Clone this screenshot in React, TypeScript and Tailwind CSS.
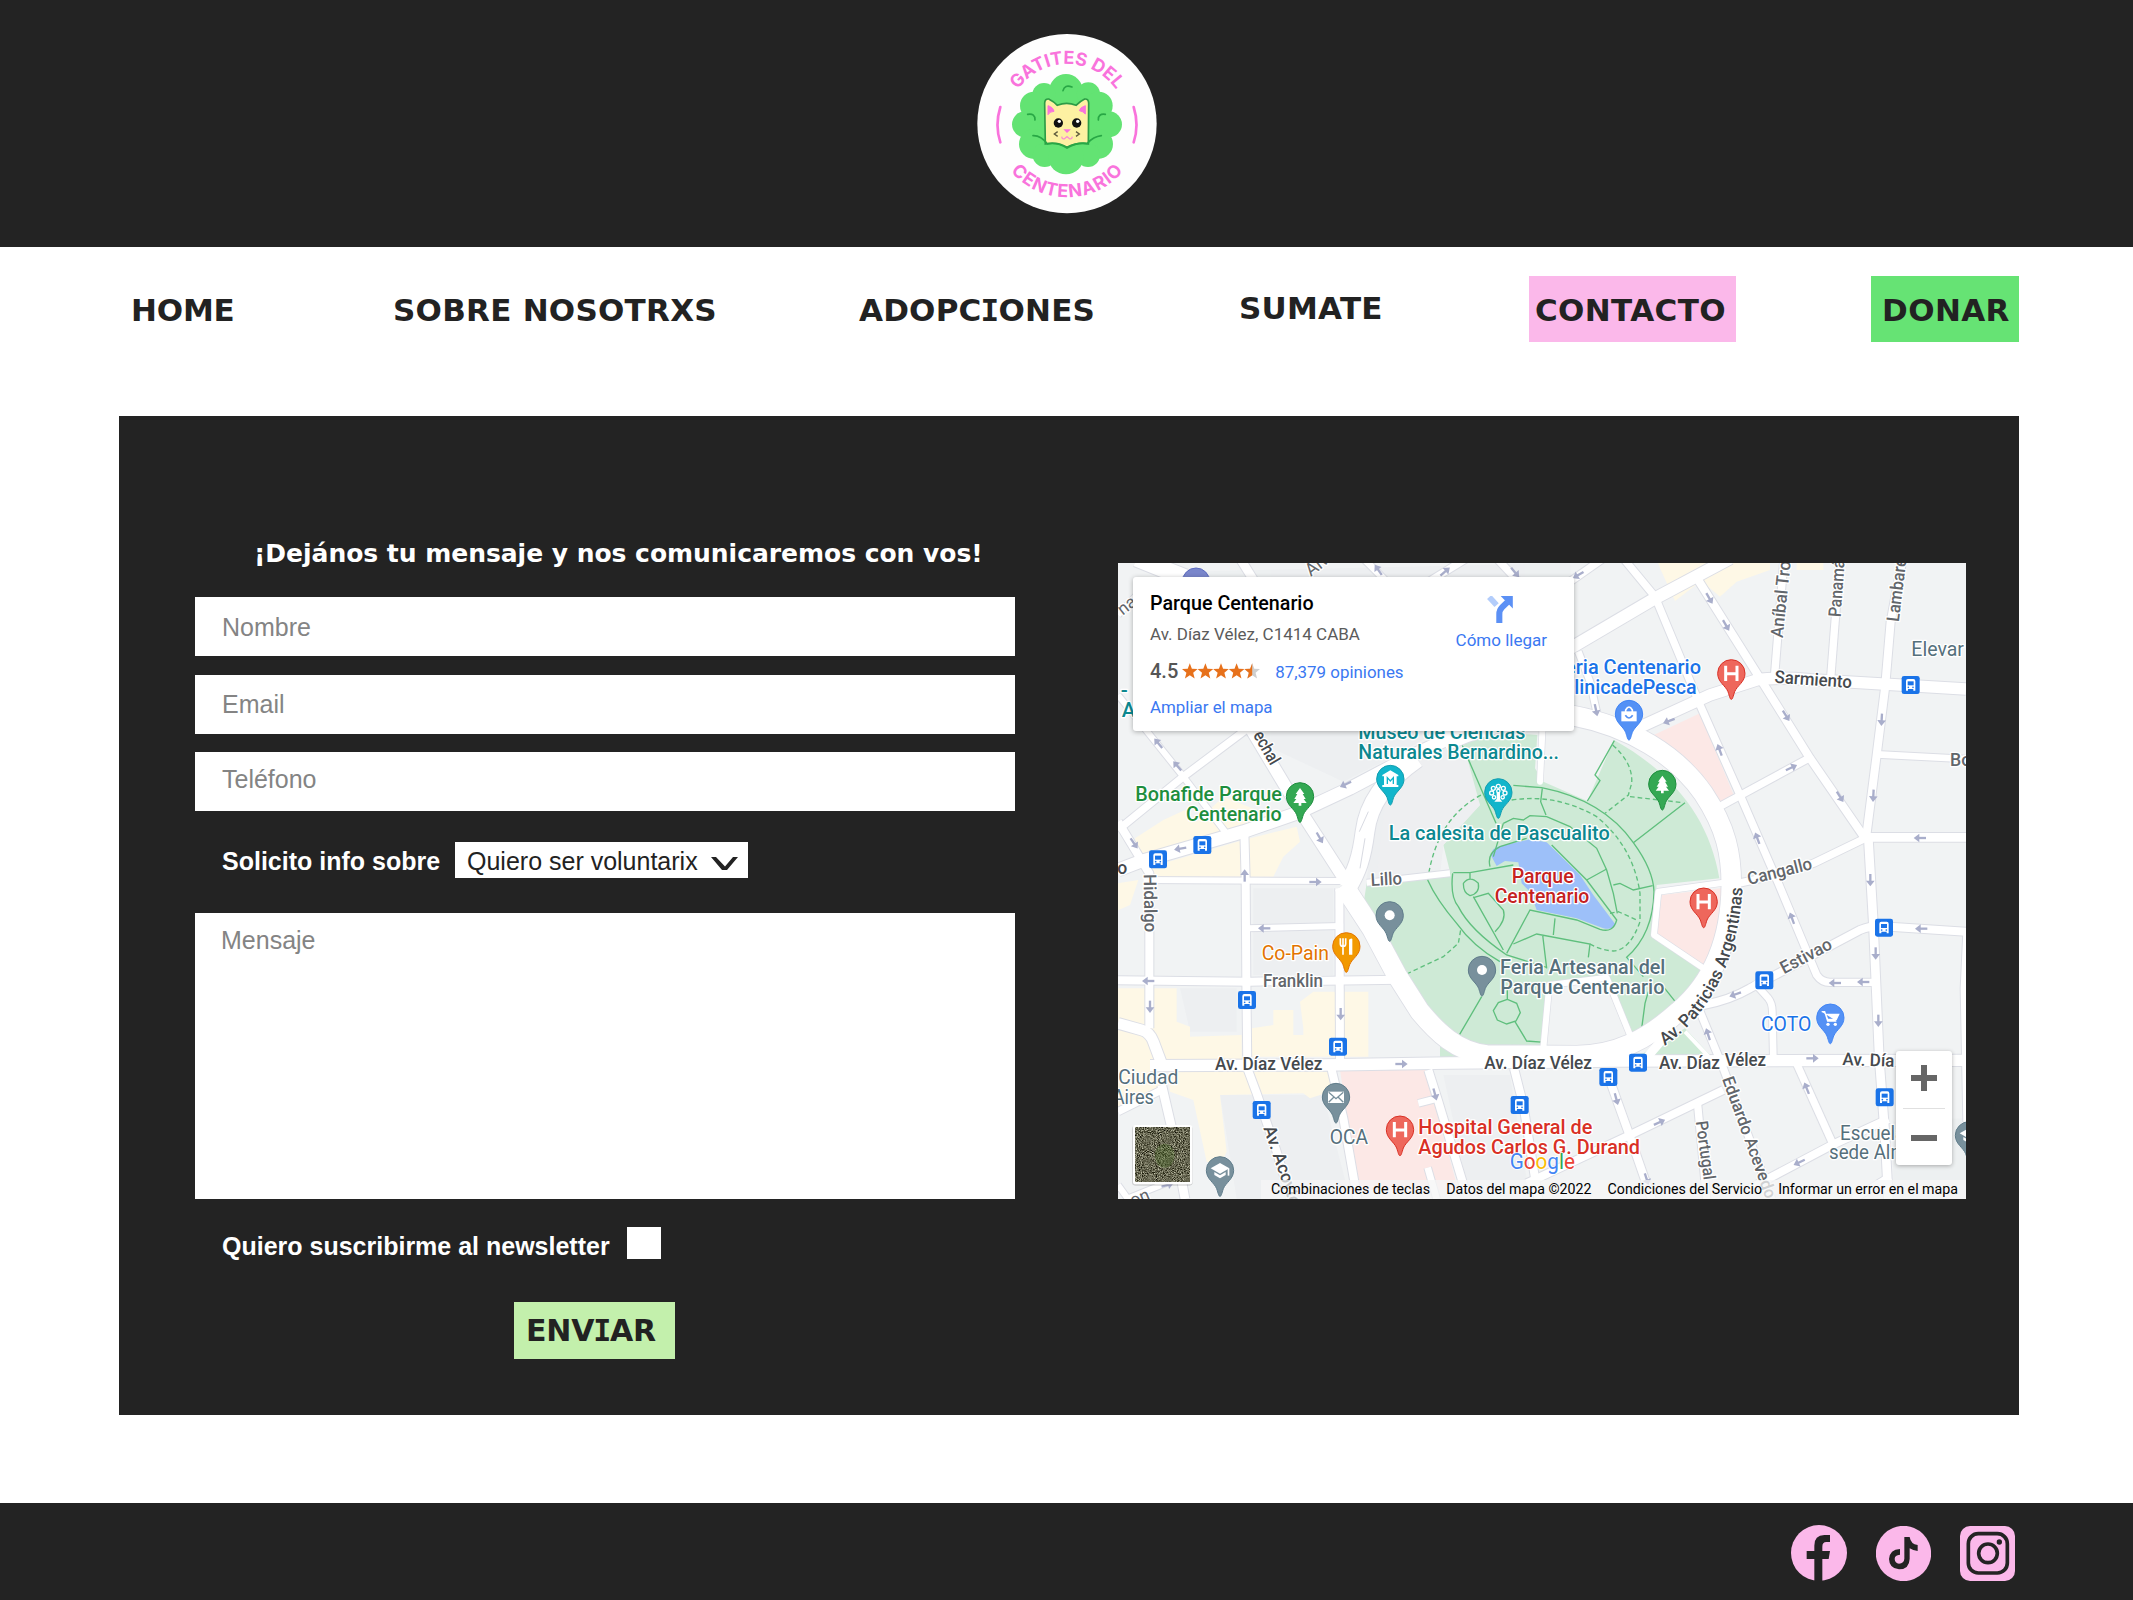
import React from "react";

const BOLD = "font-['Verdana','DejaVu_Sans',sans-serif] font-bold";
const SANS = "font-['Liberation_Sans',Arial,sans-serif]";
const ROBOTO = "font-['Roboto',sans-serif]";

/* Capital I with slab serifs, set from the monospaced cut of the same family. */
function SerifI() {
  return <span className="font-['DejaVu_Sans_Mono',monospace] -mx-[1px]">I</span>;
}

function Logo() {
  return (
    <svg viewBox="0 0 660 630" className="h-[210px] w-[220px]">
      <defs>
        <path id="arc-top" d="M142 311 A179 179 0 0 1 500 311" />
        <path id="arc-bottom" d="M100 311 A221 221 0 0 0 542 311" />
      </defs>
      <circle cx="321" cy="311" r="269" fill="#fefefe" />
      <g fill="#f973dc" fontFamily="Inter, Lato, sans-serif" fontWeight="700" fontSize="54">
        <text>
          <textPath href="#arc-top" startOffset="50%" textAnchor="middle" textLength="345">GATITES DEL</textPath>
        </text>
        <text>
          <textPath href="#arc-bottom" startOffset="50%" textAnchor="middle" textLength="384">CENTENARIO</textPath>
        </text>
      </g>
      <g fill="none" stroke="#f973dc" strokeWidth="8" strokeLinecap="round">
        <path d="M121 261 Q104 315 121 367" />
        <path d="M521 261 Q538 315 521 367" />
      </g>
      <g fill="#63e373">
        <ellipse cx="320" cy="312" rx="125" ry="108" />
        <circle cx="318" cy="212" r="50" />
        <circle cx="385" cy="222" r="35" />
        <circle cx="252" cy="224" r="35" />
        <circle cx="222" cy="257" r="42" />
        <circle cx="416" cy="257" r="42" />
        <circle cx="195" cy="313" r="39" />
        <circle cx="447" cy="313" r="39" />
        <circle cx="222" cy="372" r="45" />
        <circle cx="414" cy="372" r="45" />
        <circle cx="254" cy="405" r="36" />
        <circle cx="384" cy="405" r="36" />
        <circle cx="318" cy="410" r="53" />
      </g>
      <path
        d="M256 372 L254 250 Q254 236 266 237 Q282 245 292 256 Q320 244 348 256 Q360 244 374 237 Q386 236 386 250 L385 372 Q350 366 321 382 Q290 364 256 372Z"
        fill="#fdf1a2"
        stroke="#2d9c46"
        strokeWidth="5"
      />
      <path d="M264 257 Q280 262 282 274 Q270 274 264 284Z" fill="#f973dc" stroke="#f973dc" strokeWidth="3" />
      <path d="M376 257 Q360 262 358 272 Q370 274 376 282Z" fill="#f973dc" stroke="#f973dc" strokeWidth="3" />
      <circle cx="295" cy="309" r="14" fill="#111" />
      <circle cx="350" cy="309" r="14" fill="#111" />
      <circle cx="298" cy="304" r="5" fill="#fff" />
      <circle cx="353" cy="304" r="5" fill="#fff" />
      <path d="M310 328 H333 L321 339Z" fill="#f973dc" />
      <path d="M305 350 Q307 360 315 355 L321 350 L327 355 Q335 360 337 350" fill="none" stroke="#f990d2" strokeWidth="4" />
      <path d="M293 335 L283 342 L293 349 M348 335 L358 342 L348 349" fill="none" stroke="#5d5a3c" strokeWidth="4" />
      <g fill="none" stroke="#28a745" strokeWidth="5" strokeLinecap="round">
        <path d="M309 212 Q314 192 336 201" />
        <path d="M203 283 Q226 279 225 300" />
        <path d="M436 283 Q414 280 415 300" />
        <path d="M219 347 Q243 346 262 372 Q292 366 321 384 Q350 366 382 370 Q400 350 424 347" />
      </g>
    </svg>
  );
}

const ROADS: [string, number][] = [
  ["M80 10 L235 72", 50],
  ["M24 180 L90 110", 18],
  ["M390 10 L440 90", 26],
  ["M760 10 L840 90", 20],
  ["M1070 10 L940 90", 22],
  ["M1160 10 L1235 90", 22],
  ["M1480 10 L1380 80", 22],
  ["M24 420 L220 665 L345 830", 18],
  ["M24 825 L220 665 L420 515", 22],
  ["M24 800 L118 955 L118 1420", 24],
  ["M100 975 L700 978", 18],
  ["M403 830 L407 975 L409 1275 L412 1540 L440 1615 L500 1790 L545 1940", 24],
  ["M770 983 L1020 955", 18],
  ["M410 1120 L690 1113", 18],
  ["M24 1276 L420 1280 L870 1274", 24],
  ["M688 1000 L690 1520", 24],
  ["M664 1540 L700 1690 L742 1932", 24],
  ["M955 1545 L985 1640 L1065 1905", 24],
  ["M975 1632 L925 1645", 20],
  ["M953 1838 L980 1932", 20],
  ["M1212 1540 L1240 1650 L1285 1932", 24],
  ["M155 1590 L190 1740 L225 1932", 26],
  ["M24 1670 L165 1600", 22],
  ["M50 1932 L240 1855", 18],
  ["M24 1890 L60 1940", 18],
  ["M1540 10 L1635 125 L1770 450 L1890 720 L2005 985 L2120 1260 Q2135 1282 2160 1282 L2300 1282", 22],
  ["M1755 60 L1950 370 L2100 610 L2265 850", 24],
  ["M2275 850 L2290 1105 L2308 1515 L2325 1740 L2335 1932", 26],
  ["M2378 10 L2342 200 L2325 400 L2300 600 L2268 850", 24],
  ["M2190 10 L2162 370", 22],
  ["M2022 10 L1993 370", 22],
  ["M2300 598 L2568 612", 20],
  ["M1810 765 L2105 605", 22],
  ["M2265 847 L2568 847", 26],
  ["M1870 988 L2000 960 L2110 925 L2265 850", 22],
  ["M1405 290 L1440 380 L1462 480", 20],
  ["M1780 1350 Q1860 1335 1920 1300 L2250 1125 Q2290 1108 2340 1115 L2568 1130", 24],
  ["M1930 1280 L1975 1330 Q1987 1345 1987 1370 L1990 1510", 20],
  ["M1770 1370 L1840 1540 L1985 1932", 22],
  ["M2055 1515 L2170 1770", 22],
  ["M1250 1885 L1560 1740 L1840 1605", 24],
  ["M1920 1900 L2170 1768 L2335 1692", 24],
  ["M2230 1932 L2340 1865", 22],
  ["M1490 1550 L1560 1745 L1625 1932", 24],
  ["M1762 1640 L1790 1932", 22],
  ["M2568 1130 L2560 1300 L2568 1700", 16],
  ["M24 1405 L95 1425 Q120 1432 130 1460 L160 1540", 32],
  ["M120 1532 L640 1530 L1020 1524 L1290 1522 L1500 1518 L2568 1516", 34],
  ["M1560 530 L1800 420 L1940 375 Q2000 365 2100 374 L2568 402", 34],
  ["M1360 292 L1635 130 L1860 10", 36],
  ["M24 945 L90 920 L400 830 L560 775 L720 700 L900 605 L1080 520", 38],
  ["M380 450 L560 750 L705 975", 36],
  ["M920 610 C820 680 775 750 765 830 C755 910 740 950 710 1000", 56],
];

const RING =
  "M1000 560 Q1200 470 1390 482 C1560 515 1700 600 1780 715 C1850 820 1864 900 1864 990 C1862 1170 1800 1290 1705 1370 C1610 1455 1520 1500 1400 1502 L1130 1500 C1040 1490 980 1430 930 1370 L860 1260 L785 1120 L700 990";

const ARROWS: [number, number, number][] = [
  [805, 45, -125], [1005, 50, -40], [1215, 52, 50], [1405, 60, 150], [145, 565, -130], [202, 633, -130],
  [707, 688, 155], [629, 848, 60], [211, 881, 170], [72, 865, 55], [404, 962, -90], [616, 981, 0],
  [463, 1120, 180], [115, 1278, 180], [120, 1355, 90], [692, 1377, 90], [874, 1527, 0], [975, 1618, 75],
  [172, 1890, -15], [1798, 130, 60], [1848, 211, 60], [1458, 465, 78], [1677, 498, 160], [2028, 482, 58],
  [2315, 494, 93], [1829, 585, -110], [2044, 638, -25], [2190, 725, 58], [2290, 722, 93], [2430, 849, 180],
  [1942, 850, -110], [2281, 975, 90], [2046, 1090, -110], [2434, 1121, 180], [2297, 1195, 90],
  [2260, 1281, 180], [2175, 1284, 180], [2305, 1397, 90], [1876, 1318, 160], [1794, 1438, -108],
  [2107, 1510, 0], [1519, 1632, 75], [1648, 1702, -25], [2090, 1600, -112], [2068, 1822, 155], [1610, 1872, 72],
];

const BUSES: [number, number][] = [
  [277, 870], [144, 913], [411, 1335], [684, 1475], [455, 1665], [1229, 1650],
  [1495, 1566], [1584, 1523], [1963, 1276], [2402, 390], [2322, 1118], [2324, 1627],
];

function Bus({ x, y }: { x: number; y: number }) {
  return (
    <g transform={`translate(${x} ${y})`}>
      <rect x="-27" y="-27" width="54" height="54" rx="7" fill="#1a73e8" />
      <path d="M-14 17 V-12 Q-14 -18 -8 -18 H8 Q14 -18 14 -12 V17 H8 V12 H-8 V17Z" fill="#fff" />
      <rect x="-9" y="-11" width="18" height="12" fill="#1a73e8" />
      <circle cx="-7" cy="7" r="2.5" fill="#1a73e8" />
      <circle cx="7" cy="7" r="2.5" fill="#1a73e8" />
    </g>
  );
}

function Pin({ x, y, fill, edge, children }: { x: number; y: number; fill: string; edge: string; children?: React.ReactNode }) {
  return (
    <g transform={`translate(${x} ${y})`}>
      <path
        d="M0 78 C-4 78 -5 70 -10 55 C-18 36 -41 26 -41 0 A41 41 0 0 1 41 0 C41 26 18 36 10 55 C5 70 4 78 0 78Z"
        fill={fill}
        stroke={edge}
        strokeWidth="3"
      />
      {children}
    </g>
  );
}

const Tree = () => <path d="M0 -25 L13 -7 H8 L17 8 H11 L20 20 H4 V28 H-4 V20 H-20 L-11 8 H-17 L-8 -7 H-13Z" fill="#fff" />;
const Hospital = () => <path d="M-17 -23 V23 M17 -23 V23 M-17 1 H17" stroke="#fff" strokeWidth="9" fill="none" />;
const Grad = () => (
  <g fill="#fff">
    <path d="M0 -22 L28 -6 L0 10 L-28 -6Z" />
    <path d="M-17 5 L0 15 L17 5 V14 L0 24 L-17 14Z" />
    <path d="M23 -6 H28 V16 H23Z" />
  </g>
);

type LabelProps = { x: number; y: number; w?: number; s?: number; c: string; r?: number; wt?: number; end?: boolean; children: string };
function Label({ x, y, w, s = 62, c, r = 0, wt = 500, end, children }: LabelProps) {
  return (
    <text
      transform={`translate(${x} ${y}) rotate(${r})`}
      fontSize={s}
      fontWeight={wt}
      fill={c}
      textLength={w}
      lengthAdjust="spacingAndGlyphs"
      textAnchor={end ? "end" : "start"}
      stroke="#fff"
      strokeWidth="8"
      strokeLinejoin="round"
      paintOrder="stroke"
    >
      {children}
    </text>
  );
}

const TEAL = "#0c8890";
const SLATE = "#56707c";
const ROAD_TXT = "#62666b";
const AVE_TXT = "#45494d";

function MapDrawing() {
  return (
    <svg viewBox="24 24 2544 1908" className="block h-[636px] w-[848px]" fontFamily="Roboto, sans-serif">
      <defs>
        <path id="patricias" d="M1664 1472 C1790 1390 1888 1220 1898 990" />
        <filter id="grain" x="0" y="0" width="100%" height="100%" colorInterpolationFilters="sRGB">
          <feTurbulence type="fractalNoise" baseFrequency="0.35" numOctaves="3" seed="4" />
          <feColorMatrix values="1.3 0 0 0 -0.25  1.3 0 0 0 -0.25  1.25 0 0 0 -0.31  0 0 0 0 1" />
        </filter>
      </defs>
      <rect x="24" y="24" width="2544" height="1908" fill="#f1f3f4" />
      <g fill="#e8eaed" opacity="0.4">
        <path d="M225 50 L1380 24 L1400 480 L1000 520 L860 600 L700 680 L400 540Z" />
        <path d="M810 690 L1060 540 L1140 720 L1000 870 L990 960 L770 970Z" />
        <path d="M430 1000 H670 V1260 H430Z M210 1300 H380 V1430 H240Z" />
        <path d="M330 1620 H640 L720 1932 H380Z M1000 1560 H1200 L1260 1932 H1080Z" />
        <path d="M2350 1700 L2568 1690 V1932 H2350Z" />
      </g>
      <g fill="#fef8e6">
        <path d="M75 850 L160 795 L225 765 L260 800 L340 725 L440 765 L520 780 L400 830 L90 915Z" />
        <path d="M110 940 L400 855 L560 815 L570 860 L520 905 L490 965 H120Z" />
        <path d="M24 985 L85 975 L60 1050 L24 1066Z" />
        <path d="M24 1300 H200 V1400 L240 1415 V1445 L395 1440 V1515 H24Z" />
        <path d="M425 1420 L490 1410 V1365 H550 V1440 H580 V1420 L570 1340 L610 1310 H775 V1505 H425Z" />
        <path d="M24 1455 L110 1460 L150 1600 L24 1655Z" />
        <path d="M175 1550 H660 V1610 L600 1630 L580 1615 L330 1620 L350 1790 L330 1830 L290 1820 L250 1635 L180 1610Z" />
        <path d="M1650 40 L1640 10 H1980 V45 L1880 80 L1830 125 L1800 100 L1770 80 L1695 138Z" />
        <path d="M2060 24 H2140 V45 L2060 45Z" />
      </g>
      <g fill="#fce8e6">
        <path d="M1620 545 L1770 475 L1870 718 L1815 752 Q1740 620 1620 545Z" />
        <path d="M1655 1020 L1835 1000 Q1838 1150 1785 1235 L1640 1150Z" />
        <path d="M690 1545 H945 L1045 1905 H745Z" />
      </g>

      {/* park lawns */}
      <path
        d="M1000 560 Q1200 530 1282 540 L1275 640 L1300 680 L1432 738 L1512 555 C1700 660 1800 800 1828 970 L1640 990 L1630 1150 L1785 1240 Q1700 1400 1560 1450 L1490 1270 L1320 1280 L1300 1475 L1130 1475 Q1040 1470 960 1385 L760 1050 L770 985 L1020 950 L1000 870 L1110 750 Z"
        fill="#ceead6"
      />
      <path d="M1000 560 L1050 530 L1110 750 L1000 870 L990 940 L800 960 L830 700Z" fill="#eeeff1" />
      <path d="M1065 560 L1130 540 L1135 745 L1110 700Z" fill="#ceead6" />
      <path d="M990 1475 L1050 1480 L1040 1510 L990 1510Z M1520 1505 L1600 1495 L1725 1420 L1800 1500 L1790 1515Z" fill="#ceead6" />
      <path
        d="M1145 905 Q1140 880 1170 873 L1260 853 L1310 862 L1410 960 L1450 1020 L1516 1108 Q1510 1126 1480 1120 L1400 1090 L1280 1065 L1260 1010 L1235 985 L1225 922 L1185 918 L1160 933Z"
        fill="#9dc0f9"
      />
      <g transform="translate(780 495)" fill="none" stroke="#5fbf7d" strokeWidth="4">
        <path d="M270 60 L378 310" />
        <path d="M430 196 L515 203 Q700 240 790 368 Q850 450 852 515 Q850 640 770 712 L820 770" />
        <path d="M248 460 Q240 530 265 560 Q300 630 410 705 L530 742" />
        <path d="M173 480 Q200 540 260 610 Q310 680 390 725" />
        <path d="M250 458 L300 458 L430 435 M300 458 V476 M280 490 Q300 465 325 490 Q330 520 300 527 Q280 520 280 490 M310 530 L400 690 M313 532 L355 520 L400 570 Q410 600 375 635" />
        <path d="M360 440 Q350 400 390 380 L470 355 M400 310 L430 295 L460 300 L480 287 L530 290 L600 320 L680 385 L710 450 L730 520 L742 580" />
        <path d="M517 205 L512 245 L528 285 M545 375 L650 480 L740 600 Q730 640 690 628 L620 600 L480 570 L410 700 M650 480 L710 447 M730 495 L750 490 L790 510 L848 497 M555 595 L550 645 M430 672 L500 642 L660 672 L655 712 M518 645 L530 745" />
        <path d="M733 62 L675 165 L690 182 L652 243 M790 368 L945 248 M370 410 L400 310" />
        <path d="M265 950 L335 830 M412 838 L385 848 L370 872 L382 900 L410 912 L438 903 L451 878 L440 850 L412 838 V800 M435 905 L470 963 L525 967 M815 925 L825 850 L835 815 M880 800 L920 850" />
        <path strokeDasharray="14 9" d="M173 480 Q200 290 340 222 M425 240 Q560 220 680 290 Q790 380 810 520 V605 Q780 690 730 693 Q690 690 660 672" />
        <path strokeDasharray="14 9" d="M728 75 Q790 130 785 190 L775 225 L705 280 M780 230 L940 248 M110 762 L220 710 L265 670 L272 630 M720 580 L745 575 L805 602" />
      </g>

      {/* roads: casings first, then surfaces */}
      <g fill="none" stroke="#dcdee5" strokeLinejoin="round">
        {ROADS.map(([d, w], i) => <path key={i} d={d} strokeWidth={w + 6} />)}
        <path d={RING} strokeWidth="64" />
        <path d="M1300 1480 L1318 1290 L1490 1268 L1568 1460" strokeWidth="22" />
        <path d="M1297 530 L1290 680" strokeWidth="22" />
        <path d="M1840 983 L1645 1010 L1632 1140 L1780 1240" strokeWidth="22" />
      </g>
      <g fill="none" stroke="#fff" strokeLinejoin="round">
        {ROADS.map(([d, w], i) => <path key={i} d={d} strokeWidth={w} />)}
        <path d={RING} strokeWidth="59" />
        <path d="M1300 1480 L1318 1290 L1490 1268 L1568 1460" strokeWidth="18" />
        <path d="M1297 530 L1290 680" strokeWidth="18" strokeLinecap="round" />
        <path d="M1840 983 L1645 1010 L1632 1140 L1780 1240" strokeWidth="18" />
        <path d="M1725 1430 L1810 1520" strokeWidth="12" />
        <path d="M1600 1520 L1660 1450" strokeWidth="26" />
      </g>
      <path d="M748 830 L775 770 M765 850 L750 940" stroke="#d8dae2" strokeWidth="3" fill="none" />

      <g fill="none" stroke="#a9aecb" strokeWidth="7">
        {ARROWS.map(([x, y, r], i) => (
          <g key={i} transform={`translate(${x} ${y}) rotate(${r})`}>
            <path d="M-18 0 H8" />
            <path d="M2 -13 L19 0 L2 13Z" fill="#a9aecb" stroke="none" />
          </g>
        ))}
      </g>

      {BUSES.map(([x, y], i) => <Bus key={i} x={x} y={y} />)}

      <Label x={38} y={182} r={-38} s={52} c={ROAD_TXT} wt={400}>na</Label>
      <Label x={602} y={66} r={-38} s={54} c={ROAD_TXT} wt={400}>Álv</Label>
      <Label x={428} y={540} r={60} w={108} s={53} c={AVE_TXT}>echal</Label>
      <Label x={35} y={487} c={TEAL}>A</Label>
      <Label x={32} y={425} c={TEAL}>-</Label>
      <Label x={22} y={957} s={53} c={AVE_TXT}>o</Label>
      <Label x={745} y={552} w={501} c={TEAL}>Museo de Ciencias</Label>
      <Label x={745} y={613} w={602} c={TEAL}>Naturales Bernardino...</Label>
      <Label x={76} y={738} w={440} c="#1e8e3e">Bonafide Parque</Label>
      <Label x={228} y={797} w={287} c="#1e8e3e">Centenario</Label>
      <Label x={836} y={856} w={663} c={TEAL}>La calesita de Pascualito</Label>
      <Label x={783} y={993} w={94} s={53} r={-3} c={ROAD_TXT}>Lillo</Label>
      <Label x={1205} y={984} w={186} c="#c5221f">Parque</Label>
      <Label x={1154} y={1044} w={284} c="#c5221f">Centenario</Label>
      <Label x={1773} y={357} w={440} end c="#1a73e8">Feria Centenario</Label>
      <Label x={1760} y={417} w={406} end c="#1a73e8">ClinicadePesca</Label>
      <Label x={1993} y={383} w={232} s={53} r={4} c={AVE_TXT}>Sarmiento</Label>
      <Label x={2404} y={302} w={158} c={SLATE} wt={400}>Elevar</Label>
      <Label x={2520} y={634} s={53} c={ROAD_TXT}>Bo</Label>
      <Label x={2018} y={250} r={-84} s={53} w={245} c={ROAD_TXT}>Aníbal Troi</Label>
      <Label x={2192} y={187} r={-86} s={53} w={172} c={ROAD_TXT}>Panamá</Label>
      <Label x={2366} y={202} r={-83} s={53} w={192} c={ROAD_TXT}>Lambaré</Label>
      <Label x={1917} y={990} s={53} w={198} r={-14} c={ROAD_TXT}>Cangallo</Label>
      <Label x={101} y={958} r={89} s={53} w={174} c={ROAD_TXT}>Hidalgo</Label>
      <Label x={455} y={1215} w={202} c="#e37400" wt={400}>Co-Pain</Label>
      <Label x={459} y={1296} w={180} s={53} c={ROAD_TXT}>Franklin</Label>
      <Label x={315} y={1546} w={322} s={53} c={AVE_TXT}>Av. Díaz Vélez</Label>
      <Label x={1123} y={1541} w={323} s={53} c={AVE_TXT}>Av. Díaz Vélez</Label>
      <Label x={1647} y={1541} w={183} s={53} c={AVE_TXT}>Av. Díaz</Label>
      <Label x={1844} y={1532} w={124} s={53} c={AVE_TXT}>Vélez</Label>
      <Label x={2197} y={1530} w={156} s={53} r={2} c={AVE_TXT}>Av. Día</Label>
      <Label x={25} y={1586} w={180} c={SLATE} wt={400}>Ciudad</Label>
      <Label x={8} y={1647} w={124} c={SLATE} wt={400}>Aires</Label>
      <Label x={659} y={1768} w={115} c={SLATE} wt={400}>OCA</Label>
      <Label x={925} y={1737} w={522} c="#d93025">Hospital General de</Label>
      <Label x={925} y={1797} w={665} c="#d93025">Agudos Carlos G. Durand</Label>
      <Label x={460} y={1719} r={71} s={53} w={250} c={AVE_TXT}>Av. Acoyte</Label>
      <Label x={2022} y={1258} r={-28} s={53} w={168} c={ROAD_TXT}>Estivao</Label>
      <Label x={1953} y={1429} w={151} c="#1a73e8" wt={400}>COTO</Label>
      <Label x={1170} y={1256} w={496} c={SLATE}>Feria Artesanal del</Label>
      <Label x={1171} y={1316} w={492} c={SLATE}>Parque Centenario</Label>
      <Label x={1836} y={1572} r={70} s={51} w={385} c={ROAD_TXT}>Eduardo Acevedo</Label>
      <Label x={1757} y={1700} r={82} s={51} w={178} c={ROAD_TXT}>Portugal</Label>
      <Label x={2190} y={1755} c={SLATE} w={196} wt={400}>Escuela</Label>
      <Label x={2157} y={1813} c={SLATE} w={264} wt={400}>sede Alma</Label>
      <Label x={68} y={1955} r={-22} s={53} c={ROAD_TXT} wt={400}>on</Label>
      <text fontSize="53" fontWeight="500" fill={AVE_TXT} stroke="#fff" strokeWidth="8" paintOrder="stroke" strokeLinejoin="round">
        <textPath href="#patricias" textLength="548" lengthAdjust="spacingAndGlyphs">Av. Patricias Argentinas</textPath>
      </text>

      <Pin x={258} y={80} fill="#7986cb" edge="#5c6bc0"><path d="M-15 -14 H15 V0 H-15Z" fill="#fff" /></Pin>
      <Pin x={570} y={724} fill="#34a853" edge="#1e8e3e"><Tree /></Pin>
      <Pin x={841} y={672} fill="#12b5cb" edge="#129eaf">
        <path d="M0 -26 L24 -12 V-8 H19 V18 H24 V24 H-24 V18 H-19 V-8 H-24 V-12Z" fill="#fff" />
        <path d="M-9 15 V-4 L0 6 L9 -4 V15" fill="none" stroke="#12b5cb" strokeWidth="4" />
      </Pin>
      <Pin x={1165} y={712} fill="#12b5cb" edge="#129eaf">
        <g fill="none" stroke="#fff" strokeWidth="4">
          <circle cx="0" cy="-18" r="6" /><circle cx="-15" cy="-12" r="6" /><circle cx="15" cy="-12" r="6" />
          <circle cx="-20" cy="2" r="6" /><circle cx="20" cy="2" r="6" /><circle cx="-13" cy="15" r="5" /><circle cx="13" cy="15" r="5" />
          <circle cx="0" cy="-4" r="5" />
        </g>
        <path d="M-5 0 H5 V20 L12 28 H-12 L-5 20Z" fill="#fff" />
      </Pin>
      <Pin x={1864} y={355} fill="#ee675c" edge="#d93025"><Hospital /></Pin>
      <Pin x={1781} y={1040} fill="#ee675c" edge="#d93025"><Hospital /></Pin>
      <Pin x={870} y={1724} fill="#ee675c" edge="#d93025"><Hospital /></Pin>
      <Pin x={1557} y={477} fill="#5491f5" edge="#4285f4">
        <path d="M-23 -8 H23 V22 H-23Z" fill="#fff" />
        <path d="M-10 -6 V-12 Q0 -30 10 -12 V-6" fill="none" stroke="#fff" strokeWidth="5" />
        <path d="M-11 4 Q0 20 11 4" fill="none" stroke="#5491f5" strokeWidth="5" />
      </Pin>
      <Pin x={1657} y={687} fill="#34a853" edge="#1e8e3e"><Tree /></Pin>
      <Pin x={839} y={1081} fill="#78909c" edge="#607d8b"><circle r="15" fill="#fff" /></Pin>
      <Pin x={1116} y={1245} fill="#78909c" edge="#607d8b"><circle r="15" fill="#fff" /></Pin>
      <Pin x={709} y={1174} fill="#f29900" edge="#e37400">
        <path d="M-18 -24 V-8 Q-18 0 -10 0 Q-2 0 -2 -8 V-24 M-10 -24 V25" fill="none" stroke="#fff" strokeWidth="5" />
        <path d="M8 25 V-20 Q20 -28 18 -18 V25Z" fill="#fff" />
      </Pin>
      <Pin x={678} y={1626} fill="#78909c" edge="#607d8b">
        <rect x="-24" y="-16" width="48" height="34" fill="#fff" />
        <path d="M-22 -14 L0 5 L22 -14 M-22 16 L-6 0 M22 16 L6 0" fill="none" stroke="#78909c" strokeWidth="4" />
      </Pin>
      <Pin x={330} y={1846} fill="#78909c" edge="#607d8b"><Grad /></Pin>
      <Pin x={2577} y={1741} fill="#78909c" edge="#607d8b"><Grad /></Pin>
      <Pin x={2161} y={1388} fill="#5491f5" edge="#4285f4">
        <path d="M-26 -18 H-17 L-8 10 H18 M-14 -10 H25 L18 5 H-8Z" fill="#fff" stroke="#fff" strokeWidth="4" />
        <circle cx="-7" cy="20" r="5" fill="#fff" /><circle cx="15" cy="20" r="5" fill="#fff" />
      </Pin>

      <text x="1199" y="1841" fontSize="64" fontWeight="400" textLength="196" lengthAdjust="spacingAndGlyphs" stroke="#fff" strokeWidth="5" paintOrder="stroke">
        <tspan fill="#4285f4">G</tspan><tspan fill="#ea4335">o</tspan><tspan fill="#fbbc04">o</tspan>
        <tspan fill="#4285f4">g</tspan><tspan fill="#34a853">l</tspan><tspan fill="#ea4335">e</tspan>
      </text>

      <rect x="66" y="1712" width="182" height="180" rx="10" fill="#000" opacity="0.14" />
      <rect x="69" y="1710" width="178" height="178" rx="8" fill="#fff" />
      <g transform="translate(76 1717)">
        <rect width="164" height="164" fill="#6b675a" />
        <rect width="164" height="164" filter="url(#grain)" opacity="0.9" />
        <ellipse cx="88" cy="85" rx="30" ry="36" fill="#3f6a1e" opacity="0.28" />
      </g>
    </svg>
  );
}

function Stars() {
  const d = "M12 0 L15.200 8.600 L24 9 L17.200 14.600 L19.500 23.500 L12 18.500 L4.500 23.500 L6.800 14.600 L0 9 L8.800 8.600Z";
  return (
    <svg viewBox="0 0 120 24" className="ml-[4px] h-[16px] w-[78px]">
      {[0, 24, 48, 72].map((x) => <path key={x} d={d} transform={`translate(${x} 0)`} fill="#e7711b" />)}
      <path d={d} transform="translate(96 0)" fill="#cfcfcf" />
      <path d="M108 0 L104.800 8.600 L96 9 L102.800 14.600 L100.500 23.500 L108 18.500Z" fill="#e7711b" />
    </svg>
  );
}

function ParkMap() {
  return (
    <div className={`relative h-[636px] w-[848px] overflow-hidden ${ROBOTO}`}>
      <MapDrawing />
      <div className="absolute left-[15px] top-[14px] flex h-[154px] w-[441px] justify-between rounded-[3px] bg-white pl-[17px] pr-[27px] shadow-[0_1px_5px_rgba(0,0,0,0.3)]">
        <div className="flex flex-col items-start whitespace-nowrap">
          <div className="mt-[15px] text-[19.700px] font-medium leading-[24px] text-black">Parque Centenario</div>
          <div className="mt-[8px] text-[17px] leading-[20px] text-[#5b5b5b]">Av. Díaz Vélez, C1414 CABA</div>
          <div className="mt-[14px] flex items-center leading-[24px]">
            <span className="text-[20px] font-medium text-[#555]">4.5</span>
            <Stars />
            <span className="ml-[15px] mt-[2px] text-[16.900px] text-[#3a78f2]">87,379 opiniones</span>
          </div>
          <div className="mt-[12px] text-[16.900px] leading-[22px] text-[#3a78f2]">Ampliar el mapa</div>
        </div>
        <div className="flex flex-col items-center">
          <svg viewBox="0 0 76 80" className="mt-[19px] h-[27px] w-[26px] -translate-x-[1px]">
            <path d="M6 3 L28 27" stroke="#b3cdfb" strokeWidth="17" />
            <path d="M36 80 V54 Q36 42 44 34 L60 18" fill="none" stroke="#5b90f5" strokeWidth="18" />
            <path d="M40 0 H76 V37Z" fill="#5b90f5" />
          </svg>
          <span className="mt-[6px] text-[17px] leading-[22px] text-[#3a78f2]">Cómo llegar</span>
        </div>
      </div>
      <div className="absolute left-[778px] top-[488px] flex h-[114px] w-[56px] flex-col items-center justify-between rounded-[3px] bg-white py-[14px] shadow-[0_1px_4px_rgba(0,0,0,0.3)]">
        <svg viewBox="0 0 26 26" className="h-[26px] w-[26px]"><path d="M0 13 H26 M13 0 V26" stroke="#666" strokeWidth="6" /></svg>
        <div className="h-px w-[42px] bg-[#e0e0e0]" />
        <svg viewBox="0 0 26 26" className="h-[26px] w-[26px]"><path d="M0 13 H26" stroke="#666" strokeWidth="6" /></svg>
      </div>
      <div className="absolute bottom-0 right-0 flex h-[19px] w-[705px] items-center justify-between whitespace-nowrap bg-[#f5f5f5]/75 pl-[10px] pr-[8px] text-[14.200px] leading-[19px] text-black">
        <span>Combinaciones de teclas</span>
        <span>Datos del mapa ©2022</span>
        <span>Condiciones del Servicio</span>
        <span>Informar un error en el mapa</span>
      </div>
    </div>
  );
}

function Nav() {
  const item = "whitespace-nowrap leading-[68px]";
  return (
    <nav className={`mt-[29px] flex h-[66px] pl-[131px] text-[31px] text-[#222] ${BOLD}`}>
      <a className={`${item} w-[262px] tracking-[-0.200px]`}>HOME</a>
      <a className={`${item} w-[466px] tracking-[0.250px]`}>SOBRE NOSOTRXS</a>
      <a className={`${item} w-[380px] tracking-[0.200px]`}>ADOPC<SerifI />ONES</a>
      <a className={`${item} -mt-[2px] w-[290px] tracking-[0.250px]`}>SUMATE</a>
      <a className={`${item} w-[207px] bg-[#fbb8ea] pl-[6px] tracking-[0.350px]`}>CONTACTO</a>
      <a className={`${item} ml-[135px] w-[148px] bg-[#66e374] pl-[11px] tracking-[0.400px]`}>DONAR</a>
    </nav>
  );
}

const FIELDS = [
  { name: "Nombre", cls: "pt-[2px]" },
  { name: "Email", cls: "mt-[19px]" },
  { name: "Teléfono", cls: "mt-[18px] pb-[4px]" },
];

function ContactForm() {
  return (
    <form className={`w-[820px] text-[25px] ${SANS}`}>
      <h1 className={`mt-[121px] whitespace-nowrap pl-[59px] text-[25px] leading-[34px] tracking-[-0.030px] text-white ${BOLD}`}>
        ¡Dejános tu mensaje y nos comunicaremos con vos!
      </h1>
      <div className="mt-[26px] flex flex-col">
        {FIELDS.map((f) => (
          <input
            key={f.name}
            placeholder={f.name}
            className={`h-[59px] bg-white px-[27px] placeholder:text-[#848484] ${f.cls}`}
          />
        ))}
      </div>
      <div className="mt-[31px] flex h-[36px] items-center pl-[27px]">
        <label className="w-[233px] whitespace-nowrap pt-[4px] font-bold text-white">Solicito info sobre</label>
        <div className="flex h-[36px] w-[293px] items-center whitespace-nowrap bg-white pl-[12px] text-[#222]">
          <span className="pt-[4px]">Quiero ser voluntarix</span>
          <svg viewBox="0 0 27 13" className="ml-[13px] mt-[6px] h-[13px] w-[27px]">
            <path d="M0 0 H5 L14 9.500 L22 0 H27 L16 13 H11Z" fill="#222" />
          </svg>
        </div>
      </div>
      <textarea
        placeholder="Mensaje"
        className="mt-[35px] block h-[286px] w-full resize-none bg-white px-[26px] pt-[12px] leading-[30px] placeholder:text-[#848484]"
      />
      <div className="mt-[28px] flex h-[32px] items-center pl-[27px]">
        <label className="w-[405px] whitespace-nowrap pt-[8px] font-bold text-white">Quiero suscribirme al newsletter</label>
        <div className="h-[32px] w-[34px] bg-white" />
      </div>
      <button type="button" className={`ml-[319px] mt-[43px] block h-[57px] w-[161px] whitespace-nowrap bg-[#c3f0ac] pl-[12px] text-left text-[30px] leading-[57px] tracking-[-0.200px] text-[#222] ${BOLD}`}>
        ENV<SerifI />AR
      </button>
    </form>
  );
}

function Footer() {
  return (
    <footer className="mt-[88px] flex h-[97px] items-start justify-end bg-[#232323] pr-[118px] pt-[21px]">
      <svg viewBox="0 0 168 168" className="mt-[1px] h-[56px] w-[56px]">
        <circle cx="84" cy="84" r="84" fill="#fbb8ea" />
        <path d="M70 168 V102 H47 V78 H70 V62 Q70 30 100 30 H117 V51 H106 Q94 51 94 65 V78 H117 L113 102 H94 V168Z" fill="#232323" />
      </svg>
      <svg viewBox="0 0 165 165" className="ml-[29px] mt-[2px] h-[55px] w-[55px]">
        <circle cx="82.500" cy="82.500" r="83" fill="#fbb8ea" />
        <path d="M85 33 H101 Q104 54 125 57 V75 Q111 74 101 67 V98 Q100 130 69 130 Q40 128 39 99 Q41 71 72 69 V86 Q56 87 56 99 Q57 112 69 113 Q84 112 85 98Z" fill="#232323" />
      </svg>
      <svg viewBox="0 0 165 165" className="ml-[29px] mt-[2px] h-[55px] w-[55px]">
        <rect width="165" height="165" rx="30" fill="#fbb8ea" />
        <rect x="25" y="23" width="117" height="118" rx="30" fill="none" stroke="#232323" strokeWidth="11" />
        <circle cx="84" cy="82" r="28" fill="none" stroke="#232323" strokeWidth="11" />
        <circle cx="118" cy="48" r="8" fill="#232323" />
      </svg>
    </footer>
  );
}

export default function App() {
  return (
    <div className="flex h-[1600px] w-[2133px] flex-col overflow-hidden bg-white">
      <header className="flex h-[247px] shrink-0 justify-center bg-[#232323] pl-[7px] pt-[20px]">
        <Logo />
      </header>
      <Nav />
      <main className="ml-[119px] mt-[74px] flex h-[999px] w-[1900px] shrink-0 bg-[#232323] pl-[76px]">
        <ContactForm />
        <div className="ml-[103px] mt-[147px]">
          <ParkMap />
        </div>
      </main>
      <Footer />
    </div>
  );
}
